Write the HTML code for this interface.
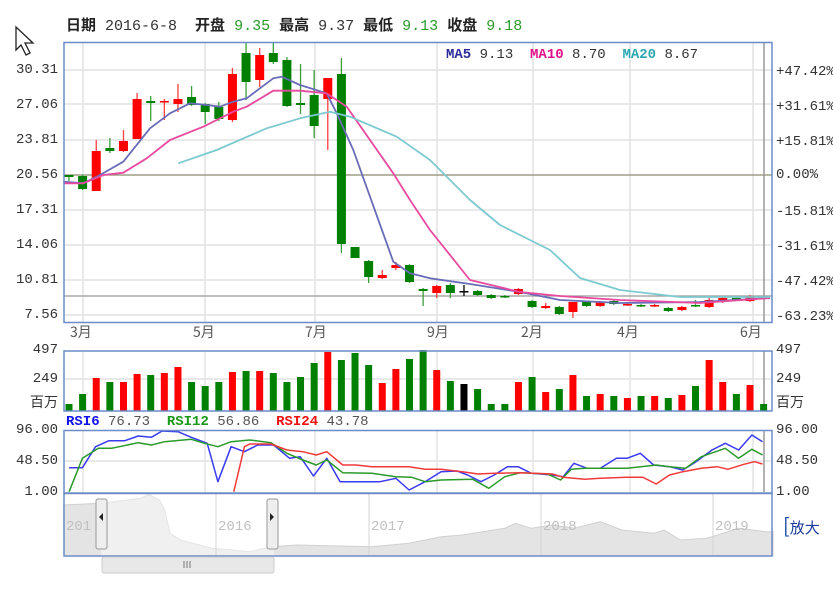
<!DOCTYPE html>
<html><head><meta charset="utf-8">
<style>
html,body{margin:0;padding:0;background:#fff;width:833px;height:589px;overflow:hidden;position:relative;font-family:"Liberation Mono","Noto Sans CJK SC",monospace;}
.t{position:absolute;white-space:nowrap;font-size:14px;color:#333;line-height:16px}
.hd{position:absolute;top:14px;font-size:15px;white-space:nowrap;color:#333}
.hd b{font-family:"Noto Sans CJK SC",sans-serif;font-weight:bold;color:#222}
.g{color:#2a9a2a}
.l{position:absolute;width:58px;text-align:right;font-size:14px;color:#333;line-height:16px}
.r{position:absolute;left:776px;font-size:14px;color:#333;line-height:16px;white-space:nowrap}
.cj{font-family:"Noto Sans CJK SC",sans-serif}
</style></head><body>
<div class="hd" style="left:66px"><b>日期</b> 2016-6-8&nbsp; <b>开盘</b> <span class="g">9.35</span> <b>最高</b> 9.37 <b>最低</b> <span class="g">9.13</span> <b>收盘</b> <span class="g">9.18</span></div>

<svg id="s" width="833" height="589" style="position:absolute;left:0;top:0">
<path d="M16 27 L16 50 L21 45 L26 55 L30 53 L25 43 L33 43 Z" fill="#fff" stroke="#222" stroke-width="1.3"/>
</svg>

<div class="t" style="left:446px;top:47px;font-size:14px"><b style="color:#2a2a9a">MA5</b> 9.13&nbsp; <b style="color:#e0108a">MA10</b> 8.70&nbsp; <b style="color:#2aa8b0">MA20</b> 8.67</div>

<div class="l" style="left:0;top:62px">30.31</div>
<div class="l" style="left:0;top:97px">27.06</div>
<div class="l" style="left:0;top:132px">23.81</div>
<div class="l" style="left:0;top:167px">20.56</div>
<div class="l" style="left:0;top:202px">17.31</div>
<div class="l" style="left:0;top:237px">14.06</div>
<div class="l" style="left:0;top:272px">10.81</div>
<div class="l" style="left:0;top:307px">7.56</div>

<div class="r" style="top:64px">+47.42%</div>
<div class="r" style="top:99px">+31.61%</div>
<div class="r" style="top:134px">+15.81%</div>
<div class="r" style="top:167px">0.00%</div>
<div class="r" style="top:204px">-15.81%</div>
<div class="r" style="top:239px">-31.61%</div>
<div class="r" style="top:274px">-47.42%</div>
<div class="r" style="top:309px">-63.23%</div>

<div class="t cj" style="left:70px;top:324px;color:#555">3月</div>
<div class="t cj" style="left:193px;top:324px;color:#555">5月</div>
<div class="t cj" style="left:305px;top:324px;color:#555">7月</div>
<div class="t cj" style="left:427px;top:324px;color:#555">9月</div>
<div class="t cj" style="left:521px;top:324px;color:#555">2月</div>
<div class="t cj" style="left:617px;top:324px;color:#555">4月</div>
<div class="t cj" style="left:740px;top:324px;color:#555">6月</div>

<div class="l" style="left:0;top:342px">497</div>
<div class="l" style="left:0;top:371px">249</div>
<div class="l cj" style="left:0;top:394px">百万</div>
<div class="r" style="top:342px">497</div>
<div class="r" style="top:371px">249</div>
<div class="r cj" style="top:394px">百万</div>

<div class="t" style="left:66px;top:414px"><b style="color:#1010ee">RSI6</b> <span style="color:#555">76.73</span>&nbsp; <b style="color:#1a9a1a">RSI12</b> <span style="color:#555">56.86</span>&nbsp; <b style="color:#ee1010">RSI24</b> <span style="color:#555">43.78</span></div>
<div class="l" style="left:0;top:422px">96.00</div>
<div class="l" style="left:0;top:453px">48.50</div>
<div class="l" style="left:0;top:484px">1.00</div>
<div class="r" style="top:422px">96.00</div>
<div class="r" style="top:453px">48.50</div>
<div class="r" style="top:484px">1.00</div>

<div class="t cj" style="left:783px;top:515px;color:#1a3a9a;font-size:15px;line-height:20px"><span style="font-size:20px;color:#1a4aaa">[</span>放大</div>

<script>
var s=document.getElementById('s'),NS='http://www.w3.org/2000/svg';
function el(n,a){var e=document.createElementNS(NS,n);for(var k in a)e.setAttribute(k,a[k]);s.appendChild(e);return e;}
function ln(x1,y1,x2,y2,c,w){el('line',{x1:x1,y1:y1,x2:x2,y2:y2,stroke:c,'stroke-width':w||1});}
[70,104,140,210,245,280,315].forEach(function(y){ln(64,y,772,y,'#e2e2e2',1.5)});
[83,205,315,437,533,630,753].forEach(function(x){ln(x,43,x,322,'#e2e2e2',1.5)});
ln(64,175,772,175,'#8a8a6a',1.3);ln(64,296,772,296,'#999',1.3);
ln(764,43,764,322,'#999',1.5);
var C=[['g',175,177,175,181],['g',176,189,175,190],['r',151,191,140,191],['g',148,151,138,153],['r',141,151,130,152],['r',99,139,93,139],['g',101,103,96,121],['r',101,102,99,120],['r',99,104,84,112],['g',97,105,86,106],['g',104,112,103,124],['g',107,119,102,121],['r',74,120,68,122],['g',53,82,42,100],['r',55,80,48,87],['g',53,62,42,64],['g',60,106,57,107],['g',103,105,64,114],['g',95,126,70,138],['r',78,99,78,150],['g',74,244,58,253],['g',247,258,247,258],['g',261,277,260,283],['r',275,278,270,279],['r',265,268,262,270],['g',265,282,264,283],['g',289,291,288,306],['r',286,293,285,298],['g',285,293,283,298],['k',291,292,285,296],['g',291,295,290,296],['g',295,298,294,299],['g',296,297,295,298],['r',289,294,288,295],['g',301,307,300,308],['r',306,308,303,309],['g',307,314,306,315],['r',302,312,302,318],['g',302,306,301,307],['r',302,306,301,307],['g',301,304,300,305],['r',304,305,303,306],['g',305,306,304,307],['r',305,306,304,307],['g',308,311,307,312],['r',307,310,306,311],['g',305,306,300,307],['r',300,307,298,308],['r',298,302,297,303],['g',298,300,296,301],['r',296,301,295,302],['g',297,298,296,299]];
var col={r:'#ff0000',g:'#008000',k:'#000'};
C.forEach(function(c,i){var x=69+i*13.62;ln(x,c[3],x,c[4],c[0]=='r'?'#ff4040':(c[0]=='g'?'#3aa03a':'#000'),1.3);
el('rect',{x:x-4.5,y:c[1],width:9,height:Math.max(1.5,c[2]-c[1]),fill:col[c[0]]});});
function pl(p,c,w,ox,sx,oy,sy){var d=p.map(function(q,i){return (i?'L':'M')+(ox+q[0]*sx).toFixed(1)+' '+(oy+q[1]*sy).toFixed(1)}).join(' ');el('path',{d:d,fill:'none',stroke:c,'stroke-width':w||1.8,'stroke-linejoin':'round'});}
function cv(p){return p.map(function(q){return [60+q[0]/3,40+q[1]/3]});}
pl(cv([[10,425],[70,430],[120,405],[190,365],[270,265],[330,220],[390,190],[440,195],[480,200],[520,185],[560,175],[640,115],[665,110],[720,135],[800,160],[830,220],[880,330],[1000,665],[1050,700],[1110,715]]).concat([[470,284],[520,292],[560,300],[620,303],[700,302],[770,298]]),'#6a6cb8',1.8,0,1,0,1);
pl(cv([[10,430],[70,430],[130,405],[190,398],[260,355],[330,300],[430,260],[520,215],[560,200],[640,152],[720,152],[800,160],[860,200],[1000,400],[1050,480],[1110,570]]).concat([[470,280],[520,292],[560,296],[620,300],[700,303],[770,298]]),'#e84aa0',1.8,0,1,0,1);
pl(cv([[355,370],[470,330],[620,265],[720,235],[810,215],[870,230],[1010,290],[1110,360]]).concat([[470,200],[500,225],[550,250],[580,278],[620,290],[680,297],[770,297]]),'#7ccad0',1.8,0,1,0,1);
el('rect',{x:64,y:42.5,width:708,height:280,fill:'none',stroke:'#6b8cc8','stroke-width':1.5});
ln(64,379,772,379,'#e2e2e2',1.5);
[83,205,315,437,533,630,753].forEach(function(x){ln(x,351,x,411,'#e2e2e2',1.5)});
ln(764,351,764,411,'#999',1.5);
var V=[['g',404],['g',394],['r',378],['g',382],['r',382],['r',374],['g',375],['r',373],['r',367],['g',382],['g',386],['g',382],['r',372],['g',371],['r',371],['g',373],['g',382],['g',377],['g',363],['r',352],['g',360],['g',353],['g',365],['r',383],['r',369],['g',359],['g',350],['r',370],['g',381],['k',384],['g',389],['g',404],['g',404],['r',382],['g',377],['r',392],['g',389],['r',375],['g',396],['r',394],['g',396],['r',398],['g',396],['r',396],['g',398],['r',395],['g',386],['r',360],['r',382],['g',394],['r',385],['g',404]];
V.forEach(function(v,i){var x=69+i*13.62;el('rect',{x:x-3.5,y:v[1],width:7,height:411-v[1],fill:col[v[0]]});});
el('rect',{x:64,y:351,width:708,height:60,fill:'none',stroke:'#6b8cc8','stroke-width':1.5});
ln(64,461,772,461,'#e2e2e2',1.5);
[83,205,315,437,533,630,753].forEach(function(x){ln(x,431,x,492,'#e2e2e2',1.5)});
ln(764,431,764,492,'#999',1.5);
var xs=1/1.882,t=1/3;
pl([[130,203],[155,203],[180,140],[205,122],[235,122],[260,108],[285,112],[305,93],[335,95],[360,112],[390,130],[410,245],[435,140],[460,155],[485,135],[515,135],[545,175],[565,170],[590,228],[615,175],[640,245],[715,245],[745,235],[770,270],[800,245],[830,215],[860,213],[880,225],[905,245],[930,225],[955,200],[975,200],[1000,220],[1040,225],[1060,230],[1080,190],[1105,205],[1130,205],[1160,175],[1180,175],[1205,160],[1230,195],[1260,200],[1285,210],[1310,185],[1340,150],[1365,130],[1390,150],[1415,105],[1435,125]],'#3a3af0',1.5,0,xs,400,t);
pl([[130,275],[155,175],[185,145],[210,145],[260,128],[285,135],[310,125],[360,118],[385,130],[410,140],[435,125],[470,120],[510,128],[540,160],[570,180],[595,195],[615,180],[645,218],[700,220],[745,230],[775,232],[800,245],[830,240],[890,238],[920,265],[950,230],[980,218],[1030,222],[1055,240],[1075,208],[1100,205],[1180,205],[1235,195],[1260,200],[1290,205],[1320,170],[1365,145],[1390,175],[1415,148],[1435,165]],'#2a9a2a',1.5,0,xs,400,t);
pl([[440,275],[460,140],[470,132],[510,132],[540,150],[570,155],[595,165],[615,155],[645,195],[670,195],[700,200],[770,200],[800,208],[830,208],[870,215],[900,222],[930,220],[980,218],[1040,222],[1060,232],[1100,238],[1130,235],[1180,232],[1210,232],[1235,252],[1260,225],[1285,215],[1320,205],[1350,200],[1370,208],[1400,193],[1420,185],[1435,192]],'#f03a3a',1.5,0,xs,400,t);
el('rect',{x:64,y:430.5,width:708,height:62.5,fill:'none',stroke:'#6b8cc8','stroke-width':1.5});
var A=[[120,315],[190,310],[215,305],[265,295],[280,283],[300,300],[310,330],[320,400],[340,420],[400,445],[470,455],[510,440],[560,435],[700,440],[770,430],[830,410],[870,405],[950,385],[970,370],[1000,385],[1040,375],[1080,385],[1130,365],[1170,390],[1230,400],[1250,390],[1280,420],[1330,415],[1360,400],[1390,385],[1440,395],[1455,395]];
var d='M64 556 '+A.map(function(q){return 'L'+(q[0]*xs).toFixed(1)+' '+(400+q[1]/3).toFixed(1)}).join(' ')+' L773 556 Z';
el('path',{d:d,fill:'#e4e4e4',stroke:'#d0d0d0'});
el('rect',{x:101,y:494,width:173,height:62,fill:'#fff','fill-opacity':0.45});
[216,369,541,713].forEach(function(x){ln(x,494,x,556,'#d4d4d4',1)});
[[66,'201'],[218,'2016'],[371,'2017'],[543,'2018'],[715,'2019']].forEach(function(a){var e=el('text',{x:a[0],y:530,fill:'#c0c0c0','font-size':14,'font-family':'Liberation Mono'});e.textContent=a[1];});
el('rect',{x:64,y:493.5,width:708,height:62.5,fill:'none',stroke:'#6b8cc8','stroke-width':1.5});
[[96,'M103 513 L99 517 L103 521 Z'],[267,'M270 513 L274 517 L270 521 Z']].forEach(function(h){el('rect',{x:h[0],y:499,width:11,height:50,rx:2,fill:'#eee',stroke:'#999'});el('path',{d:h[1],fill:'#222'});});
el('rect',{x:102,y:557,width:172,height:16,rx:2,fill:'#e8e8e8',stroke:'#ccc'});
[184,187,190].forEach(function(x){ln(x,561,x,568,'#777',1)});
</script>
</body></html>
